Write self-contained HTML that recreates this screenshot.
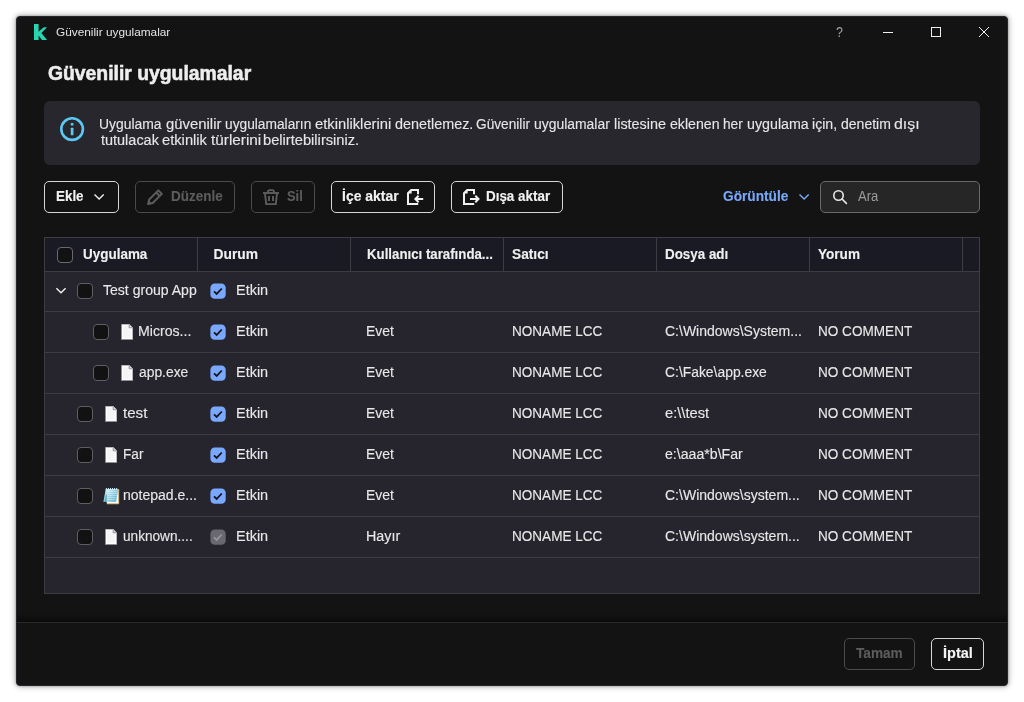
<!DOCTYPE html>
<html lang="tr">
<head>
<meta charset="utf-8">
<title>Güvenilir uygulamalar</title>
<style>
*{box-sizing:border-box;margin:0;padding:0}
html,body{width:1024px;height:702px;overflow:hidden;background:#fff}
body{position:relative;font-family:"Liberation Sans",sans-serif;font-size:13.8px;color:#e6e6e6}
.abs{position:absolute}
.win{position:absolute;left:16px;top:16px;width:992px;height:670px;background:#131313;border-radius:4px;border:1px solid #25262c;box-shadow:0 0 6px rgba(0,0,0,.4),0 0 2px rgba(0,0,0,.32)}
.t{position:absolute;white-space:nowrap;line-height:16px;height:16px;transform-origin:0 0}
.b{font-weight:bold}
.title{font-size:11px;color:#e4e4e4}
.h1{font-size:19.5px;line-height:24px;height:24px;font-weight:bold;color:#eeeeee;-webkit-text-stroke:.55px #eeeeee}
.inf{color:#e6e6e6;-webkit-text-stroke:.12px}
.wl{position:absolute;left:0;width:1024px;height:16px;line-height:16px;white-space:nowrap}
.wl .t{top:0;display:block}
.info{position:absolute;left:44px;top:101px;width:936px;height:64px;background:#27272d;border-radius:6px}
.btn{position:absolute;top:181px;height:32px;border:1px solid #d6d6d6;border-radius:5px;background:#131313}
.btn.dis{border-color:#4b4b4b}
.bt{font-weight:bold;color:#f2f2f2;-webkit-text-stroke:.12px}
.bt.dis{color:#5d5d5d}
.lnk{color:#7aa8fa;-webkit-text-stroke:.12px}
.ph{color:#9c9c9c}
.hd{color:#f0f0f0;-webkit-text-stroke:.12px}
.search{position:absolute;left:820px;top:181px;width:160px;height:32px;border:1px solid #6a6a6a;border-radius:5px;background:#262626}
.table{position:absolute;left:44px;top:237px;width:936px;height:357px;border:1px solid #3e3e42;background:#26252e}
.thead{position:absolute;left:0;top:0;width:934px;height:33px;background:#1a1a24}
.hline{position:absolute;left:0;width:934px;height:1px;background:#3c3c43}
.vline{position:absolute;top:0;width:1px;height:33px;background:#3c3c43}
.cb{position:absolute;width:16px;height:16px;border:1px solid #5f5f63;border-radius:4px;background:#121212}
.cell{color:#e8e8e8;-webkit-text-stroke:.12px}
.foot{position:absolute;left:17px;top:622px;width:990px;height:1px;background:#292929}
.fsh{position:absolute;left:17px;top:612px;width:990px;height:10px;background:linear-gradient(to bottom,rgba(0,0,0,0),rgba(0,0,0,.13) 45%,rgba(0,0,0,.42))}
</style>
</head>
<body>
<div class="win"></div>
<div id="layer" style="position:absolute;left:0;top:0;width:1024px;height:702px;will-change:transform">

<!-- title bar -->
<svg class="abs" style="left:34px;top:24px" width="14" height="16" viewBox="0 0 14 16"><path d="M0 0H4.6V7.8L9.8 3.3H13L7.4 9L13.1 16H8L4.6 11.5V16H0Z" fill="#27d5b0"/></svg>
<div id="title" class="t title" style="left:55.53px;top:23.8px;transform:scaleX(1.0741)">Güvenilir uygulamalar</div>
<div class="t" style="left:836.1px;top:23.7px;font-size:15.5px;color:#a6a6a6;transform:scaleX(.8)">?</div>
<svg class="abs" style="left:880px;top:24px" width="120" height="16" viewBox="0 0 120 16" fill="none" stroke="#f0f0f0" stroke-width="1">
<path d="M3 8.5h10"/><rect x="51.5" y="3.5" width="9" height="9"/><path d="M99 3l10 10M109 3l-10 10"/></svg>

<div id="h1" class="t h1" style="left:48.17px;top:61px;transform:scaleX(0.9919)">Güvenilir uygulamalar</div>

<!-- info -->
<div class="info"></div>
<svg class="abs" style="left:60px;top:117px" width="25" height="25" viewBox="0 0 25 25"><circle cx="12.1" cy="12.1" r="10.8" fill="none" stroke="#5cc8f2" stroke-width="2.6"/><rect x="10.75" y="6.1" width="2.7" height="2.3" rx=".5" fill="#5cc8f2"/><rect x="10.75" y="10.8" width="2.7" height="7.5" rx=".5" fill="#5cc8f2"/></svg>
<div class="inf wl" style="top:116.6px"><span id="i1w0" class="t" style="left:99.49px;top:0px;transform:scaleX(1.0068)">Uygulama</span> <span id="i1w1" class="t" style="left:166.39px;top:0px;transform:scaleX(1.0784)">güvenilir</span> <span id="i1w2" class="t" style="left:224.84px;top:0px;transform:scaleX(0.9961)">uygulamaların</span> <span id="i1w3" class="t" style="left:315.14px;top:0px;transform:scaleX(1.0699)">etkinliklerini</span> <span id="i1w4" class="t" style="left:395.40px;top:0px;transform:scaleX(1.0419)">denetlemez.</span> <span id="i1w5" class="t" style="left:476.09px;top:0px;transform:scaleX(0.9922)">Güvenilir</span> <span id="i1w6" class="t" style="left:534.33px;top:0px;transform:scaleX(1.0090)">uygulamalar</span> <span id="i1w7" class="t" style="left:614.30px;top:0px;transform:scaleX(1.0428)">listesine</span> <span id="i1w8" class="t" style="left:670.41px;top:0px;transform:scaleX(1.0246)">eklenen</span> <span id="i1w9" class="t" style="left:723.09px;top:0px;transform:scaleX(0.9921)">her</span> <span id="i1w10" class="t" style="left:746.56px;top:0px;transform:scaleX(1.0323)">uygulama</span> <span id="i1w11" class="t" style="left:812.07px;top:0px;transform:scaleX(1.0257)">için,</span> <span id="i1w12" class="t" style="left:840.66px;top:0px;transform:scaleX(1.0156)">denetim</span> <span id="i1w13" class="t" style="left:893.62px;top:0px;transform:scaleX(1.1492)">dışı</span></div>
<div class="inf wl" style="top:132.6px"><span id="i2w0" class="t" style="left:100.50px;top:0px;transform:scaleX(1.0482)">tutulacak</span> <span id="i2w1" class="t" style="left:162.14px;top:0px;transform:scaleX(1.0655)">etkinlik</span> <span id="i2w2" class="t" style="left:210.50px;top:0px;transform:scaleX(1.1109)">türlerini</span> <span id="i2w3" class="t" style="left:263.29px;top:0px;transform:scaleX(1.0630)">belirtebilirsiniz.</span></div>

<!-- toolbar -->
<div class="btn" style="left:44px;width:75px"></div>
<div id="ekle" class="t bt" style="left:55.85px;top:189.2px;transform:scaleX(0.9717)">Ekle</div>
<svg class="abs" style="left:93px;top:193px" width="12" height="8" viewBox="0 0 12 8"><path d="M1.5 1.5L6.1 6.1 10.7 1.5" fill="none" stroke="#f0f0f0" stroke-width="1.4"/></svg>

<div class="btn dis" style="left:135px;width:100px"></div>
<svg class="abs" style="left:147px;top:189px" width="17" height="17" viewBox="0 0 17 17" fill="none" stroke="#5d5d5d" stroke-width="2" stroke-linejoin="round"><path d="M11.3 1.4L14.8 4.9 5.7 14 1.1 15.1 2.2 10.5z"/><path d="M9.2 3.5l3.5 3.5"/><path d="M1.9 11.9L4.3 14.3 1.1 15.1z" fill="#5d5d5d" stroke-width="1"/></svg>
<div id="duz" class="t bt dis" style="left:171.10px;top:189.2px;transform:scaleX(0.9760)">Düzenle</div>

<div class="btn dis" style="left:251px;width:64px"></div>
<svg class="abs" style="left:263px;top:189px" width="16" height="16" viewBox="0 0 16 16" fill="none" stroke="#5d5d5d" stroke-width="1.9"><path d="M0 4h16"/><path d="M5 3.8V2.9a1.8 1.8 0 0 1 1.8-1.8h2.4a1.8 1.8 0 0 1 1.8 1.8v.9"/><path d="M2 4.5l1.2 10.6h9.6L14 4.5"/><path d="M6 7v5M10 7v5"/></svg>
<div id="sil" class="t bt dis" style="left:287.09px;top:189.2px;transform:scaleX(0.9319)">Sil</div>

<div class="btn" style="left:331px;width:104px"></div>
<div id="ice" class="t bt" style="left:342.33px;top:189.2px;transform:scaleX(1.0120)">İçe aktar</div>
<svg class="abs" style="left:407px;top:189px" width="17" height="16" viewBox="0 0 17 16" fill="none" stroke="#f0f0f0" stroke-width="2"><path d="M11 5.2V1H4.2L1 4.2V15h10.2"/><path d="M1.3 4.6h3.3V1.3z" fill="#f0f0f0" stroke="none"/><path d="M16.2 10H9"/><path d="M11.6 6.8L8.4 10l3.2 3.2" stroke-width="2"/></svg>

<div class="btn" style="left:451px;width:112px"></div>
<svg class="abs" style="left:463px;top:189px" width="17" height="16" viewBox="0 0 17 16" fill="none" stroke="#f0f0f0" stroke-width="2"><path d="M11 5.2V1H4.2L1 4.2V15h10.2"/><path d="M1.3 4.6h3.3V1.3z" fill="#f0f0f0" stroke="none"/><path d="M7 10h8"/><path d="M12.3 6.8l3.2 3.2-3.2 3.2" stroke-width="2"/></svg>
<div id="disa" class="t bt" style="left:486.35px;top:189.2px;transform:scaleX(0.9719)">Dışa aktar</div>

<div id="gor" class="t b lnk" style="left:722.67px;top:189.2px;transform:scaleX(0.9903)">Görüntüle</div>
<svg class="abs" style="left:798px;top:193px" width="12" height="8" viewBox="0 0 12 8"><path d="M1.5 1.5L6.1 6.1 10.7 1.5" fill="none" stroke="#7aa8fa" stroke-width="1.4"/></svg>
<div class="search"></div>
<svg class="abs" style="left:832px;top:189px" width="16" height="16" viewBox="0 0 16 16" fill="none" stroke="#e8e8e8" stroke-width="1.6"><circle cx="6.5" cy="6.5" r="4.7"/><path d="M10 10l4.4 4.4" stroke-linecap="round"/></svg>
<div id="ara" class="t ph" style="left:858.30px;top:189px;transform:scaleX(0.9462)">Ara</div>

<!-- table -->
<div class="table">
<div class="thead"></div>
<div class="hline" style="top:33px"></div>
<div class="vline" style="left:152px"></div>
<div class="vline" style="left:305px"></div>
<div class="vline" style="left:458px"></div>
<div class="vline" style="left:611px"></div>
<div class="vline" style="left:764px"></div>
<div class="vline" style="left:917px"></div>
<div class="hline" style="top:73px"></div>
<div class="hline" style="top:114px"></div>
<div class="hline" style="top:155px"></div>
<div class="hline" style="top:196px"></div>
<div class="hline" style="top:237px"></div>
<div class="hline" style="top:278px"></div>
<div class="hline" style="top:319px"></div>
</div>
<div class="cb" style="left:57px;top:247px;border-color:#6a6a6e"></div>
<div id="h_uyg" class="t b hd" style="left:82.85px;top:247.2px;transform:scaleX(0.9758)">Uygulama</div>
<div id="h_dur" class="t b hd" style="left:213.58px;top:247.2px">Durum</div>
<div id="h_kul" class="t b hd" style="left:366.86px;top:247.2px;transform:scaleX(0.9602)">Kullanıcı tarafında...</div>
<div id="h_sat" class="t b hd" style="left:511.67px;top:247.2px;transform:scaleX(0.9953)">Satıcı</div>
<div id="h_dos" class="t b hd" style="left:664.85px;top:247.2px;transform:scaleX(0.9699)">Dosya adı</div>
<div id="h_yor" class="t b hd" style="left:817.67px;top:247.2px;transform:scaleX(0.9840)">Yorum</div>

<svg class="abs" style="left:55px;top:287px" width="12" height="8" viewBox="0 0 12 8"><path d="M1.4 1.2L6 5.7 10.6 1.2" fill="none" stroke="#f0f0f0" stroke-width="1.4"/></svg>
<div class="cb" style="left:77px;top:283px"></div>
<div id="r0n" class="t cell" style="left:103.41px;top:283.2px;transform:scaleX(1.0182)">Test group App</div>
<svg class="abs" style="left:210px;top:283px" width="16" height="16" viewBox="0 0 16 16"><rect x="0.4" y="0.4" width="15.3" height="15.3" rx="4.3" fill="#79a8fe"/><path d="M4 8.3l2.7 2.6L11.8 5.5" fill="none" stroke="#16161a" stroke-width="1.8"/></svg>
<div id="r0e" class="t cell" style="left:235.55px;top:283.2px;transform:scaleX(1.0483)">Etkin</div>
<div class="cb" style="left:93px;top:324px"></div>
<svg class="abs" style="left:121px;top:324px" width="12" height="16" viewBox="0 0 12 16"><path d="M0.5 0.5H8.3L11.5 3.7V15.5H0.5z" fill="#fdfdfe"/><path d="M2.2 2.2H8v3.6h1.8v8H2.2z" fill="#f4f5f7"/><path d="M8.3 0.5V3.7H11.5z" fill="#e4e5e9"/><path d="M8.2 1V3.8H11.2" fill="none" stroke="#85868c" stroke-width="0.9"/><path d="M0.5 0.5H8.3L11.5 3.7V15.5" fill="none" stroke="#bcbdc2" stroke-width="0.9"/><path d="M0.5 0.3V15.5H11.7" fill="none" stroke="#8e8f95" stroke-width="1"/></svg>
<div id="r1n" class="t cell" style="left:138.28px;top:324.2px;transform:scaleX(1.0240)">Micros...</div>
<svg class="abs" style="left:210px;top:324px" width="16" height="16" viewBox="0 0 16 16"><rect x="0.4" y="0.4" width="15.3" height="15.3" rx="4.3" fill="#79a8fe"/><path d="M4 8.3l2.7 2.6L11.8 5.5" fill="none" stroke="#16161a" stroke-width="1.8"/></svg>
<div id="r1e" class="t cell" style="left:235.55px;top:324.2px;transform:scaleX(1.0483)">Etkin</div>
<div id="r1u" class="t cell" style="left:366.49px;top:324.2px;transform:scaleX(1.0125)">Evet</div>
<div id="r1v" class="t cell" style="left:511.52px;top:324.2px;transform:scaleX(0.9825)">NONAME LCC</div>
<div id="r1p" class="t cell" style="left:664.72px;top:324.2px;transform:scaleX(1.0150)">C:\Windows\System...</div>
<div id="r1c" class="t cell" style="left:817.52px;top:324.2px;transform:scaleX(0.9835)">NO COMMENT</div>
<div class="cb" style="left:93px;top:365px"></div>
<svg class="abs" style="left:121px;top:365px" width="12" height="16" viewBox="0 0 12 16"><path d="M0.5 0.5H8.3L11.5 3.7V15.5H0.5z" fill="#fdfdfe"/><path d="M2.2 2.2H8v3.6h1.8v8H2.2z" fill="#f4f5f7"/><path d="M8.3 0.5V3.7H11.5z" fill="#e4e5e9"/><path d="M8.2 1V3.8H11.2" fill="none" stroke="#85868c" stroke-width="0.9"/><path d="M0.5 0.5H8.3L11.5 3.7V15.5" fill="none" stroke="#bcbdc2" stroke-width="0.9"/><path d="M0.5 0.3V15.5H11.7" fill="none" stroke="#8e8f95" stroke-width="1"/></svg>
<div id="r2n" class="t cell" style="left:138.67px;top:365.2px;transform:scaleX(1.0034)">app.exe</div>
<svg class="abs" style="left:210px;top:365px" width="16" height="16" viewBox="0 0 16 16"><rect x="0.4" y="0.4" width="15.3" height="15.3" rx="4.3" fill="#79a8fe"/><path d="M4 8.3l2.7 2.6L11.8 5.5" fill="none" stroke="#16161a" stroke-width="1.8"/></svg>
<div id="r2e" class="t cell" style="left:235.55px;top:365.2px;transform:scaleX(1.0483)">Etkin</div>
<div id="r2u" class="t cell" style="left:366.49px;top:365.2px;transform:scaleX(1.0125)">Evet</div>
<div id="r2v" class="t cell" style="left:511.52px;top:365.2px;transform:scaleX(0.9825)">NONAME LCC</div>
<div id="r2p" class="t cell" style="left:664.73px;top:365.2px;transform:scaleX(1.0060)">C:\Fake\app.exe</div>
<div id="r2c" class="t cell" style="left:817.52px;top:365.2px;transform:scaleX(0.9835)">NO COMMENT</div>
<div class="cb" style="left:77px;top:406px"></div>
<svg class="abs" style="left:105px;top:406px" width="12" height="16" viewBox="0 0 12 16"><path d="M0.5 0.5H8.3L11.5 3.7V15.5H0.5z" fill="#fdfdfe"/><path d="M2.2 2.2H8v3.6h1.8v8H2.2z" fill="#f4f5f7"/><path d="M8.3 0.5V3.7H11.5z" fill="#e4e5e9"/><path d="M8.2 1V3.8H11.2" fill="none" stroke="#85868c" stroke-width="0.9"/><path d="M0.5 0.5H8.3L11.5 3.7V15.5" fill="none" stroke="#bcbdc2" stroke-width="0.9"/><path d="M0.5 0.3V15.5H11.7" fill="none" stroke="#8e8f95" stroke-width="1"/></svg>
<div id="r3n" class="t cell" style="left:123.30px;top:406.2px;transform:scaleX(1.0970)">test</div>
<svg class="abs" style="left:210px;top:406px" width="16" height="16" viewBox="0 0 16 16"><rect x="0.4" y="0.4" width="15.3" height="15.3" rx="4.3" fill="#79a8fe"/><path d="M4 8.3l2.7 2.6L11.8 5.5" fill="none" stroke="#16161a" stroke-width="1.8"/></svg>
<div id="r3e" class="t cell" style="left:235.55px;top:406.2px;transform:scaleX(1.0483)">Etkin</div>
<div id="r3u" class="t cell" style="left:366.49px;top:406.2px;transform:scaleX(1.0125)">Evet</div>
<div id="r3v" class="t cell" style="left:511.52px;top:406.2px;transform:scaleX(0.9825)">NONAME LCC</div>
<div id="r3p" class="t cell" style="left:665.04px;top:406.2px;transform:scaleX(1.0659)">e:\\test</div>
<div id="r3c" class="t cell" style="left:817.52px;top:406.2px;transform:scaleX(0.9835)">NO COMMENT</div>
<div class="cb" style="left:77px;top:447px"></div>
<svg class="abs" style="left:105px;top:447px" width="12" height="16" viewBox="0 0 12 16"><path d="M0.5 0.5H8.3L11.5 3.7V15.5H0.5z" fill="#fdfdfe"/><path d="M2.2 2.2H8v3.6h1.8v8H2.2z" fill="#f4f5f7"/><path d="M8.3 0.5V3.7H11.5z" fill="#e4e5e9"/><path d="M8.2 1V3.8H11.2" fill="none" stroke="#85868c" stroke-width="0.9"/><path d="M0.5 0.5H8.3L11.5 3.7V15.5" fill="none" stroke="#bcbdc2" stroke-width="0.9"/><path d="M0.5 0.3V15.5H11.7" fill="none" stroke="#8e8f95" stroke-width="1"/></svg>
<div id="r4n" class="t cell" style="left:122.61px;top:447.2px;transform:scaleX(0.9864)">Far</div>
<svg class="abs" style="left:210px;top:447px" width="16" height="16" viewBox="0 0 16 16"><rect x="0.4" y="0.4" width="15.3" height="15.3" rx="4.3" fill="#79a8fe"/><path d="M4 8.3l2.7 2.6L11.8 5.5" fill="none" stroke="#16161a" stroke-width="1.8"/></svg>
<div id="r4e" class="t cell" style="left:235.55px;top:447.2px;transform:scaleX(1.0483)">Etkin</div>
<div id="r4u" class="t cell" style="left:366.49px;top:447.2px;transform:scaleX(1.0125)">Evet</div>
<div id="r4v" class="t cell" style="left:511.52px;top:447.2px;transform:scaleX(0.9825)">NONAME LCC</div>
<div id="r4p" class="t cell" style="left:665.06px;top:447.2px;transform:scaleX(1.0248)">e:\aaa*b\Far</div>
<div id="r4c" class="t cell" style="left:817.52px;top:447.2px;transform:scaleX(0.9835)">NO COMMENT</div>
<div class="cb" style="left:77px;top:488px"></div>
<svg class="abs" style="left:103px;top:487.8px" width="17" height="17" viewBox="0 0 17 17"><defs><linearGradient id="ng5" x1="0" y1="0" x2="1" y2="0"><stop offset="0" stop-color="#a9e2ef"/><stop offset=".28" stop-color="#b9e8f3"/><stop offset=".6" stop-color="#8fd1e4"/><stop offset="1" stop-color="#4fa9c7"/></linearGradient><linearGradient id="nh5" x1="0" y1="0" x2="0" y2="1"><stop offset="0" stop-color="#fff" stop-opacity=".35"/><stop offset="1" stop-color="#2b8fb0" stop-opacity=".25"/></linearGradient></defs><path d="M4 1.2H16V16.1H3.8z" fill="#fcfcfb"/><path d="M15.75 1.2V15.85H3.8" fill="none" stroke="#b2975e" stroke-width="0.9"/><path d="M2.8 1.1H15.1L13.1 13.8H0.4z" fill="url(#ng5)"/><path d="M2.8 1.1H15.1L13.1 13.8H0.4z" fill="url(#nh5)"/><path d="M2.9 6.5L3.9 6.5 3.6 13.6 1.4 13.6z" fill="#4f98b0" fill-opacity=".75"/><path d="M4 3.4h10.6M4 5.4h10.3M4 7.4h10M3.9 9.4h9.7M3.9 11.4h9.4" stroke="#e6f7fb" stroke-opacity=".6" stroke-width="0.8"/><path d="M3.4 0v2.1M5.45 0v2.1M7.5 0v2.1M9.55 0v2.1M11.6 0v2.1M13.65 0v2.1" stroke="#c9edf5" stroke-width="1.05"/></svg>
<div id="r5n" class="t cell" style="left:122.62px;top:488.2px;transform:scaleX(1.0155)">notepad.e...</div>
<svg class="abs" style="left:210px;top:488px" width="16" height="16" viewBox="0 0 16 16"><rect x="0.4" y="0.4" width="15.3" height="15.3" rx="4.3" fill="#79a8fe"/><path d="M4 8.3l2.7 2.6L11.8 5.5" fill="none" stroke="#16161a" stroke-width="1.8"/></svg>
<div id="r5e" class="t cell" style="left:235.55px;top:488.2px;transform:scaleX(1.0483)">Etkin</div>
<div id="r5u" class="t cell" style="left:366.49px;top:488.2px;transform:scaleX(1.0125)">Evet</div>
<div id="r5v" class="t cell" style="left:511.52px;top:488.2px;transform:scaleX(0.9825)">NONAME LCC</div>
<div id="r5p" class="t cell" style="left:664.72px;top:488.2px;transform:scaleX(1.0160)">C:\Windows\system...</div>
<div id="r5c" class="t cell" style="left:817.52px;top:488.2px;transform:scaleX(0.9835)">NO COMMENT</div>
<div class="cb" style="left:77px;top:529px"></div>
<svg class="abs" style="left:105px;top:529px" width="12" height="16" viewBox="0 0 12 16"><path d="M0.5 0.5H8.3L11.5 3.7V15.5H0.5z" fill="#fdfdfe"/><path d="M2.2 2.2H8v3.6h1.8v8H2.2z" fill="#f4f5f7"/><path d="M8.3 0.5V3.7H11.5z" fill="#e4e5e9"/><path d="M8.2 1V3.8H11.2" fill="none" stroke="#85868c" stroke-width="0.9"/><path d="M0.5 0.5H8.3L11.5 3.7V15.5" fill="none" stroke="#bcbdc2" stroke-width="0.9"/><path d="M0.5 0.3V15.5H11.7" fill="none" stroke="#8e8f95" stroke-width="1"/></svg>
<div id="r6n" class="t cell" style="left:122.64px;top:529.2px;transform:scaleX(0.9874)">unknown....</div>
<svg class="abs" style="left:210px;top:529px" width="16" height="16" viewBox="0 0 16 16"><rect x="0.4" y="0.4" width="15.3" height="15.3" rx="4.3" fill="#68686e"/><path d="M4 8.3l2.7 2.6L11.8 5.5" fill="none" stroke="#96969c" stroke-width="1.8"/></svg>
<div id="r6e" class="t cell" style="left:235.55px;top:529.2px;transform:scaleX(1.0483)">Etkin</div>
<div id="r6u" class="t cell" style="left:366.46px;top:529.2px;transform:scaleX(1.0358)">Hayır</div>
<div id="r6v" class="t cell" style="left:511.52px;top:529.2px;transform:scaleX(0.9825)">NONAME LCC</div>
<div id="r6p" class="t cell" style="left:664.72px;top:529.2px;transform:scaleX(1.0160)">C:\Windows\system...</div>
<div id="r6c" class="t cell" style="left:817.52px;top:529.2px;transform:scaleX(0.9835)">NO COMMENT</div>

<!-- footer -->
<div class="fsh"></div>
<div class="foot"></div>
<div class="btn dis" style="left:844px;top:638px;width:71px"></div>
<div id="tamam" class="t bt dis" style="left:856.30px;top:646.2px;transform:scaleX(0.9879)">Tamam</div>
<div class="btn" style="left:931px;top:638px;width:53px"></div>
<div id="iptal" class="t bt" style="left:942.80px;top:646.2px;transform:scaleX(1.0538)">İptal</div>
</div>
</body>
</html>
